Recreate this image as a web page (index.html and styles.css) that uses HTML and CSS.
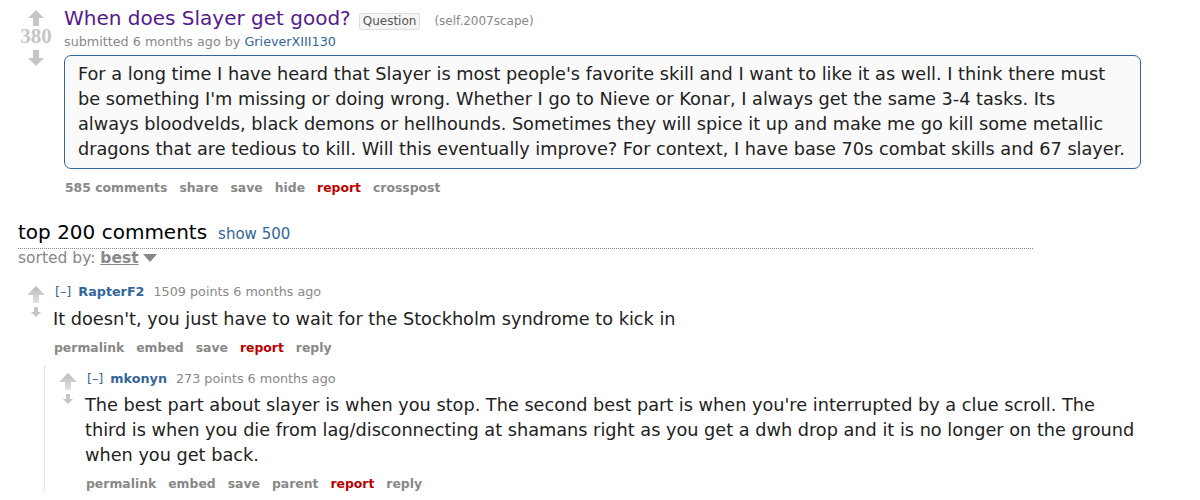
FILE: index.html
```html
<!DOCTYPE html>
<html>
<head>
<meta charset="utf-8">
<link rel="stylesheet" href="styles.css">
</head>
<body>
<div class="page">
  <div class="post">
    <div class="midcol">
      <svg class="arrow-big" width="16" height="16" viewBox="0 0 16 16"><path d="M8 0 L16 8 L11 8 L11 16 L5 16 L5 8 L0 8 Z" fill="#c6c6c6"/></svg>
      <div class="score">380</div>
      <svg class="arrow-big" width="16" height="16" viewBox="0 0 16 16"><path d="M8 16 L16 8 L11 8 L11 0 L5 0 L5 8 L0 8 Z" fill="#c6c6c6"/></svg>
    </div>
    <div class="entry">
      <p class="title"><a class="title-link" href="#">When does Slayer get good?</a><span class="flair">Question</span><span class="domain">(self.2007scape)</span></p>
      <p class="tagline">submitted 6 months ago by <a class="author" href="#">GrieverXIII130</a></p>
      <div class="usertext">
        <div class="md">For a long time I have heard that Slayer is most people's favorite skill and I want to like it as well. I think there must<br>be something I'm missing or doing wrong. Whether I go to Nieve or Konar, I always get the same 3-4 tasks. Its<br>always bloodvelds, black demons or hellhounds. Sometimes they will spice it up and make me go kill some metallic<br>dragons that are tedious to kill. Will this eventually improve? For context, I have base 70s combat skills and 67 slayer.</div>
      </div>
      <ul class="buttons">
        <li>585 comments</li><li>share</li><li>save</li><li>hide</li><li class="report">report</li><li>crosspost</li>
      </ul>
    </div>
  </div>

  <div class="comments-head">
    <div class="panel-title"><span class="big">top 200 comments</span><a class="show" href="#">show 500</a></div>
    <div class="sorted">sorted by: <b>best</b><span class="tri"></span></div>
  </div>

  <div class="comment">
    <div class="cmid">
      <svg width="18" height="17" viewBox="0 0 18 17"><defs><linearGradient id="g1" x1="0" y1="0" x2="0" y2="1"><stop offset="0" stop-color="#b8b8b8"/><stop offset="1" stop-color="#e4e4e4"/></linearGradient></defs><path d="M9 0 L18 9 L12 9 L12 17 L6 17 L6 9 L0 9 Z" fill="url(#g1)"/></svg>
      <svg class="down-small" width="10" height="10" viewBox="0 0 10 10"><path d="M5 10 L10 5 L7 5 L7 0 L3 0 L3 5 L0 5 Z" fill="#c6c6c6"/></svg>
    </div>
    <div class="centry">
      <p class="ctag"><span class="expand">[–]</span><a class="cauthor" href="#">RapterF2</a><span class="score-c">1509 points 6 months ago</span></p>
      <div class="cbody">It doesn't, you just have to wait for the Stockholm syndrome to kick in</div>
      <ul class="buttons cbuttons">
        <li>permalink</li><li>embed</li><li>save</li><li class="report">report</li><li>reply</li>
      </ul>
    </div>
  </div>

  <div class="child">
    <div class="comment">
      <div class="cmid">
        <svg width="18" height="17" viewBox="0 0 18 17"><defs><linearGradient id="g2" x1="0" y1="0" x2="0" y2="1"><stop offset="0" stop-color="#b8b8b8"/><stop offset="1" stop-color="#e4e4e4"/></linearGradient></defs><path d="M9 0 L18 9 L12 9 L12 17 L6 17 L6 9 L0 9 Z" fill="url(#g2)"/></svg>
        <svg class="down-small" width="10" height="10" viewBox="0 0 10 10"><path d="M5 10 L10 5 L7 5 L7 0 L3 0 L3 5 L0 5 Z" fill="#c6c6c6"/></svg>
      </div>
      <div class="centry">
        <p class="ctag"><span class="expand">[–]</span><a class="cauthor" href="#">mkonyn</a><span class="score-c">273 points 6 months ago</span></p>
        <div class="cbody cbody-wide">The best part about slayer is when you stop. The second best part is when you're interrupted by a clue scroll. The third is when you die from lag/disconnecting at shamans right as you get a dwh drop and it is no longer on the ground when you get back.</div>
        <ul class="buttons cbuttons">
          <li>permalink</li><li>embed</li><li>save</li><li>parent</li><li class="report">report</li><li>reply</li>
        </ul>
      </div>
    </div>
  </div>
</div>
</body>
</html>
```
FILE: styles.css
```css
* { box-sizing: border-box; }
html, body { margin: 0; padding: 0; background: #fff; }
body { font-family: "DejaVu Sans", Verdana, sans-serif; color: #222; }
a { text-decoration: none; }
p { margin: 0; }
ul { margin: 0; padding: 0; list-style: none; }

.page { padding: 6px 0 0 18px; }

.post { display: flex; }
.midcol { width: 36px; display: flex; flex-direction: column; align-items: center; margin-right: 10px; padding-top: 4px; }
.score { font-family: "Liberation Serif", serif; font-weight: bold; font-size: 21px; line-height: 22px; color: #c6c6c6; margin: -1px 0 3px; }
.arrow-big { display: block; }

.entry { flex: 1; }
.title { display: flex; align-items: baseline; line-height: 24px; }
.title-link { font-size: 20px; color: #551a8b; }
.flair { font-size: 12px; color: #545454; background: #f5f5f5; border: 1px solid #dedede; padding: 0 3px; line-height: 15px; margin-left: 8px; border-radius: 2px; }
.domain { font-size: 12px; color: #888; margin-left: 14px; }
.tagline { font-size: 12.75px; color: #888; line-height: 16px; margin-top: 1px; }
.author { color: #369; }

.usertext { margin-top: 5px; width: 1077px; border: 1px solid #369; border-radius: 7px; background: #fafafa; padding: 6px 13px 6px; }
.md { font-size: 17.7px; line-height: 25px; color: #222; width: 1049px; }

.buttons { display: flex; gap: 12px; font-size: 12.4px; font-weight: bold; color: #888; margin-top: 11px; padding-left: 1px; line-height: 16px; }
.buttons .report { color: #b00; }

.comments-head { margin-top: 24px; width: 1015px; }
.panel-title { display: flex; align-items: baseline; border-bottom: 1px dotted #888; padding-bottom: 4px; }
.big { font-size: 20px; color: #000; line-height: 24px; }
.show { font-size: 15px; color: #369; margin-left: 11px; }
.sorted { font-size: 15.5px; color: #888; line-height: 20px; margin-top: -1px; }
.sorted b { text-decoration: underline; color: #888; }
.tri { display: inline-block; width: 0; height: 0; border-left: 7px solid transparent; border-right: 7px solid transparent; border-top: 8px solid #888; margin-left: 4px; vertical-align: 1px; }

.comment { display: flex; margin-top: 16px; }
.cmid { width: 35px; display: flex; flex-direction: column; align-items: center; padding-top: 2px; flex: none; }
.cmid svg { display: block; }
.down-small { margin-top: 4px; }
.centry { flex: 1; }
.ctag { font-size: 12.75px; line-height: 16px; color: #888; margin-top: 0; }
.expand { color: #369; margin-left: 2px; }
.cauthor { color: #369; font-weight: bold; margin: 0 9px 0 7px; }
.cbody { font-size: 17.7px; line-height: 25px; color: #222; margin-top: 7px; }
.cbody-wide { width: 1052px; margin-top: 6px; }
.cbuttons { margin-top: 8px; }

.child { margin-left: 26px; border-left: 1px dotted #c7c7f0; padding-left: 5px; margin-top: 10px; }
.child .comment { margin-top: 0; padding-top: 5px; }
```
